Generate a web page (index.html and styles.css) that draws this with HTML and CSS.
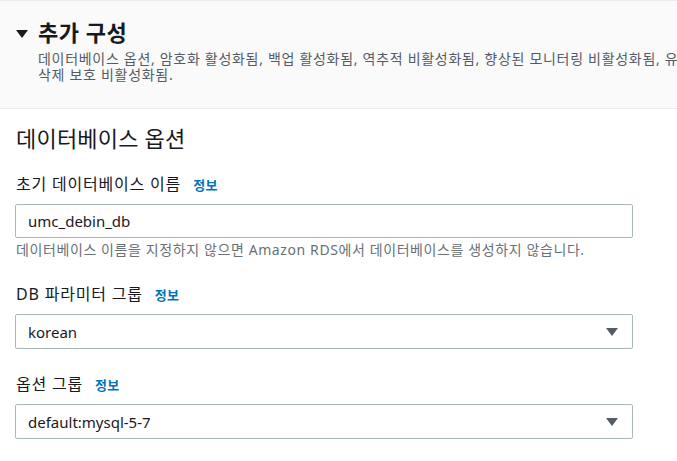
FILE: index.html
```html
<!DOCTYPE html>
<html lang="ko">
<head>
<meta charset="utf-8">
<link rel="stylesheet" href="styles.css">
</head>
<body>
<div class="page">
  <div class="expander">
    <div class="exp-title">
      <span class="caret"></span>
      <h2>추가 구성</h2>
    </div>
    <div class="exp-desc">
      <span class="line">데이터베이스 옵션, 암호화 활성화됨, 백업 활성화됨, 역추적 비활성화됨, 향상된 모니터링 비활성화됨, 유지 관리, CloudWatch Logs,</span>
      <span class="line">삭제 보호 비활성화됨.</span>
    </div>
  </div>
  <div class="content">
    <h3 class="section-title">데이터베이스 옵션</h3>

    <div class="field field-first">
      <div class="label">초기 데이터베이스 이름<a class="info">정보</a></div>
      <div class="input">umc_debin_db</div>
      <div class="hint">데이터베이스 이름을 지정하지 않으면 Amazon RDS에서 데이터베이스를 생성하지 않습니다.</div>
    </div>

    <div class="field field-second">
      <div class="label">DB 파라미터 그룹<a class="info">정보</a></div>
      <div class="input select">korean<span class="arrow"></span></div>
    </div>

    <div class="field field-third">
      <div class="label">옵션 그룹<a class="info">정보</a></div>
      <div class="input select">default:mysql-5-7<span class="arrow"></span></div>
    </div>
  </div>
</div>
</body>
</html>
```

FILE: styles.css
```css
html, body {
  margin: 0;
  padding: 0;
  background: #ffffff;
  overflow: hidden;
}
body {
  font-family: "Noto Sans", "Noto Sans CJK KR", sans-serif;
  color: #16191f;
}
.page {
  width: 677px;
  height: 461px;
  overflow: hidden;
}
.expander {
  background: #fafafa;
  border-top: 1px solid #eaeded;
  border-bottom: 1px solid #eaeded;
  height: 109px;
  box-sizing: border-box;
  padding: 17px 0 0 16px;
  overflow: hidden;
}
.exp-title {
  display: flex;
  align-items: flex-start;
  gap: 10px;
}
.caret {
  width: 0;
  height: 0;
  border-left: 6px solid transparent;
  border-right: 6px solid transparent;
  border-top: 8px solid #16191f;
  margin-top: 12px;
}
.exp-title h2 {
  margin: 0;
  font-size: 22px;
  font-weight: 700;
  line-height: 28px;
  letter-spacing: 0.5px;
}
.exp-desc {
  margin: 5px 0 0 22px;
  font-size: 14px;
  line-height: 16px;
  letter-spacing: 0.7px;
  color: #545b64;
  white-space: nowrap;
}
.exp-desc .line {
  display: block;
}
.content {
  padding: 0 44px 0 15px;
}
.section-title {
  margin: 15px 0 0 1px;
  font-size: 22px;
  font-weight: 400;
  line-height: 28px;
  letter-spacing: 0.2px;
  color: #16191f;
}
.field-first {
  margin-top: 22px;
}
.field-second {
  margin-top: 25px;
}
.field-third {
  margin-top: 25px;
}
.label {
  margin-left: 1px;
  font-size: 16px;
  line-height: 20px;
  letter-spacing: 0.8px;
  color: #16191f;
}
.info {
  margin-left: 12px;
  font-size: 13px;
  font-weight: 700;
  letter-spacing: 0.3px;
  color: #0073bb;
}
.input {
  margin-top: 9px;
  height: 34px;
  box-sizing: border-box;
  border: 1px solid #aab7b8;
  border-radius: 2px;
  padding: 0 12px;
  display: flex;
  align-items: center;
  font-size: 15px;
  color: #16191f;
  background: #fff;
}
.select {
  justify-content: space-between;
  height: 35px;
}
.arrow {
  width: 0;
  height: 0;
  border-left: 6px solid transparent;
  border-right: 6px solid transparent;
  border-top: 8px solid #545b64;
  margin-right: 2px;
}
.hint {
  margin: 3px 0 0 1px;
  font-size: 14px;
  line-height: 18px;
  letter-spacing: 0.6px;
  color: #687078;
}
```
